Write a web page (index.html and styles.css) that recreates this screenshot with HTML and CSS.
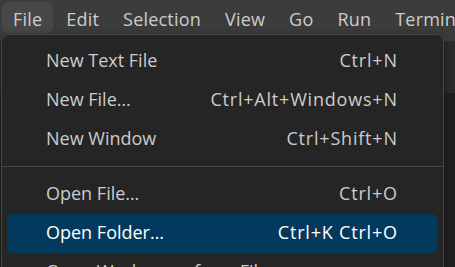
FILE: index.html
```html
<!DOCTYPE html>
<html>
<head>
<meta charset="utf-8">
<link rel="stylesheet" href="styles.css">
</head>
<body>
<div class="window">
  <div class="menubar">
    <div class="mb-item active">File</div>
    <div class="mb-item">Edit</div>
    <div class="mb-item">Selection</div>
    <div class="mb-item">View</div>
    <div class="mb-item">Go</div>
    <div class="mb-item">Run</div>
    <div class="mb-item">Terminal</div>
  </div>
  <div class="tabbar"></div>
  <div class="editor"></div>

  <div class="menu">
    <div class="item"><span class="label">New Text File</span><span class="key">Ctrl+N</span></div>
    <div class="item"><span class="label">New File…</span><span class="key">Ctrl+Alt+Windows+N</span></div>
    <div class="item"><span class="label">New Window</span><span class="key">Ctrl+Shift+N</span></div>
    <div class="sep"></div>
    <div class="item"><span class="label">Open File…</span><span class="key">Ctrl+O</span></div>
    <div class="item selected"><span class="label">Open Folder…</span><span class="key">Ctrl+K Ctrl+O</span></div>
    <div class="item"><span class="label">Open Workspace from File…</span><span class="key"></span></div>
  </div>
</div>
</body>
</html>
```

FILE: styles.css
```css
* { box-sizing: border-box; }
html, body {
  margin: 0;
  padding: 0;
  width: 455px;
  height: 267px;
  overflow: hidden;
  background: #1e1e1e;
}
.window {
  position: relative;
  width: 455px;
  height: 267px;
  display: flex;
  flex-direction: column;
  font-family: "Open Sans", "Noto Sans", sans-serif;
  font-size: 18px;
  color: #cccccc;
}
.menubar {
  height: 41px;
  flex: none;
  background: #3c3c3c;
  display: flex;
  gap: 2px;
  padding: 2px 0 0 2px;
  white-space: nowrap;
  overflow: hidden;
}
.mb-item {
  height: 31px;
  line-height: 28px;
  padding: 3px 11px 0;
  border-radius: 6px;
  color: #cccccc;
  letter-spacing: 0.2px;
}
.mb-item.active {
  background: #474747;
}
.tabbar {
  height: 52px;
  flex: none;
  background: #2b2b2b;
}
.editor {
  flex: 1;
  background: #1f1f1f;
}
.menu {
  position: absolute;
  left: 1px;
  top: 34px;
  width: 443px;
  height: 260px;
  background: #252526;
  border: 1px solid #454545;
  border-radius: 8px;
  padding-top: 7px;
  box-shadow: 0 2px 8px rgba(0, 0, 0, 0.36);
}
.item {
  height: 39px;
  line-height: 37px;
  margin: 0 6px 0 5px;
  padding: 0 40px 0 39px;
  display: flex;
  justify-content: space-between;
  border-radius: 5px;
  white-space: nowrap;
}
.key {
  letter-spacing: 0.8px;
  margin-right: -0.8px;
}
.item.selected {
  background: #04395e;
  color: #ffffff;
}
.sep {
  height: 1px;
  background: #454545;
  margin: 7px 0 8px;
}
```
